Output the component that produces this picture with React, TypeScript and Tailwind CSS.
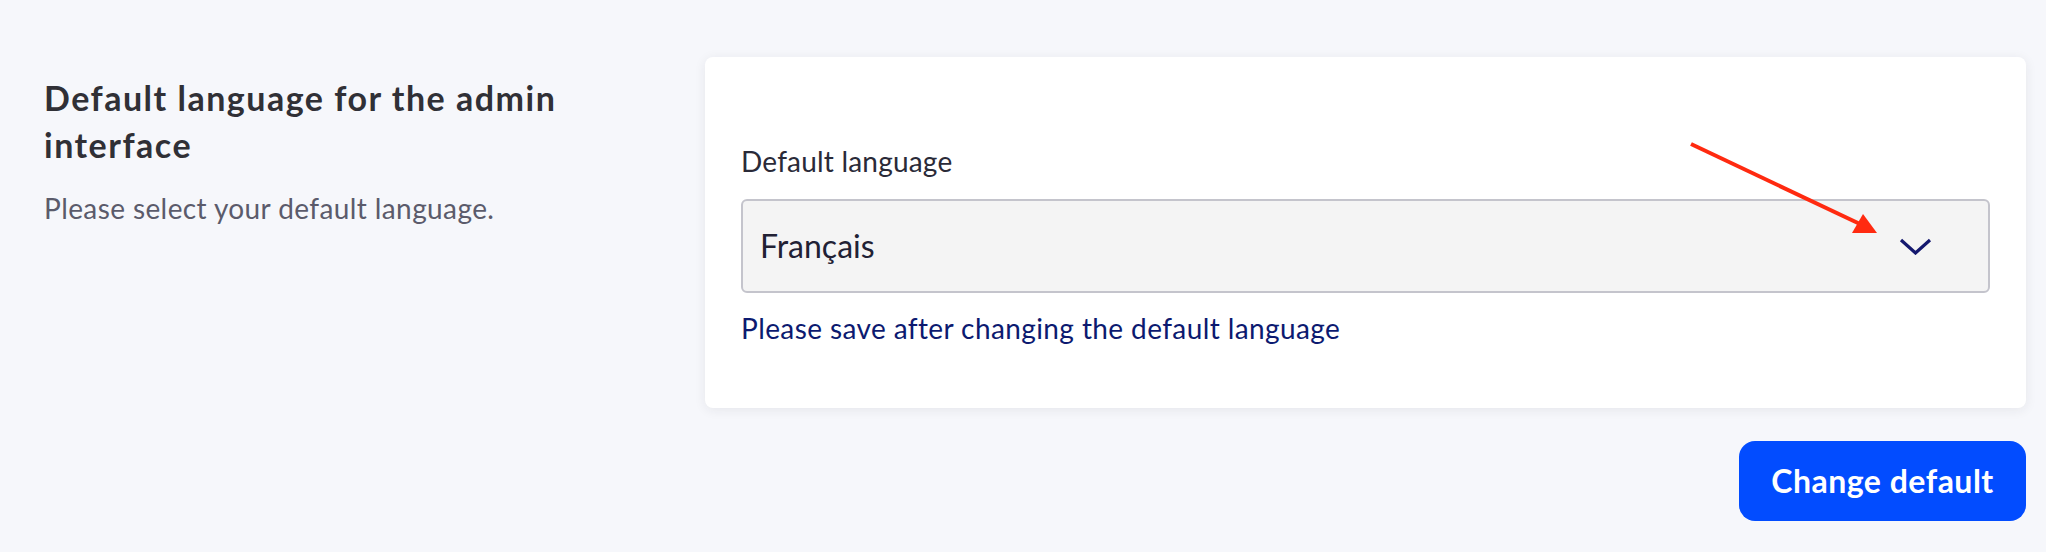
import { useState } from "react";

export default function App() {
  const [language, setLanguage] = useState("Français");

  return (
    <div
      className="relative min-h-screen w-full bg-[#f6f7fb] text-[#32324d]"
      style={{ fontFamily: "Lato, 'Noto Sans', sans-serif" }}
    >
      <div className="flex pl-[44px] pr-[20px] pt-[57px]">
        {/* Left description */}
        <div className="w-[661px] shrink-0 pr-[60px] pt-[17px]">
          <h2 className="text-[34px] font-bold leading-[47px] tracking-[1.5px] text-[#303036]">
            Default language for the admin interface
          </h2>
          <p className="mt-[19px] text-[28px] leading-[42px] tracking-[0.4px] text-[#5b5b6b]">
            Please select your default language.
          </p>
        </div>

        {/* Right card */}
        <div className="flex flex-1 flex-col">
          <div className="rounded-[8px] bg-white px-[36px] pt-[83px] pb-[59px] shadow-[0_2px_12px_rgba(33,33,52,0.08)]">
            <label className="block text-[28px] leading-[42px] tracking-[0.2px] text-[#2a2a38]">
              Default language
            </label>
            <div className="mt-[17px] flex h-[94px] items-center justify-between rounded-[6px] border-2 border-[#c4c4cc] bg-[#f4f4f4] pl-[17px] pr-[56px]">
              <span className="text-[32px] text-[#212134]">{language}</span>
              <button onClick={() => setLanguage(language)} className="flex items-center">
                <svg width="33" height="17" viewBox="0 0 33 17" fill="none">
                  <path d="M2 2 L16.5 15 L31 2" stroke="#14186e" strokeWidth="3.2" />
                </svg>
              </button>
            </div>
            <p className="mt-[14px] text-[28px] leading-[42px] tracking-[0.4px] text-[#0c1a70]">
              Please save after changing the default language
            </p>
          </div>
          <div className="mt-[33px] flex justify-end">
            <button className="h-[80px] w-[287px] rounded-[16px] bg-[#024cff] text-[32px] font-bold tracking-[0.5px] text-white">
              Change default
            </button>
          </div>
        </div>
      </div>

      {/* annotation arrow */}
      <svg
        className="pointer-events-none absolute left-0 top-0"
        width="2046"
        height="552"
        viewBox="0 0 2046 552"
      >
        <line x1="1691" y1="144" x2="1860" y2="224" stroke="#ff2a10" strokeWidth="4" />
        <polygon points="1863,214 1852,233 1877,233" fill="#ff2a10" />
      </svg>
    </div>
  );
}
